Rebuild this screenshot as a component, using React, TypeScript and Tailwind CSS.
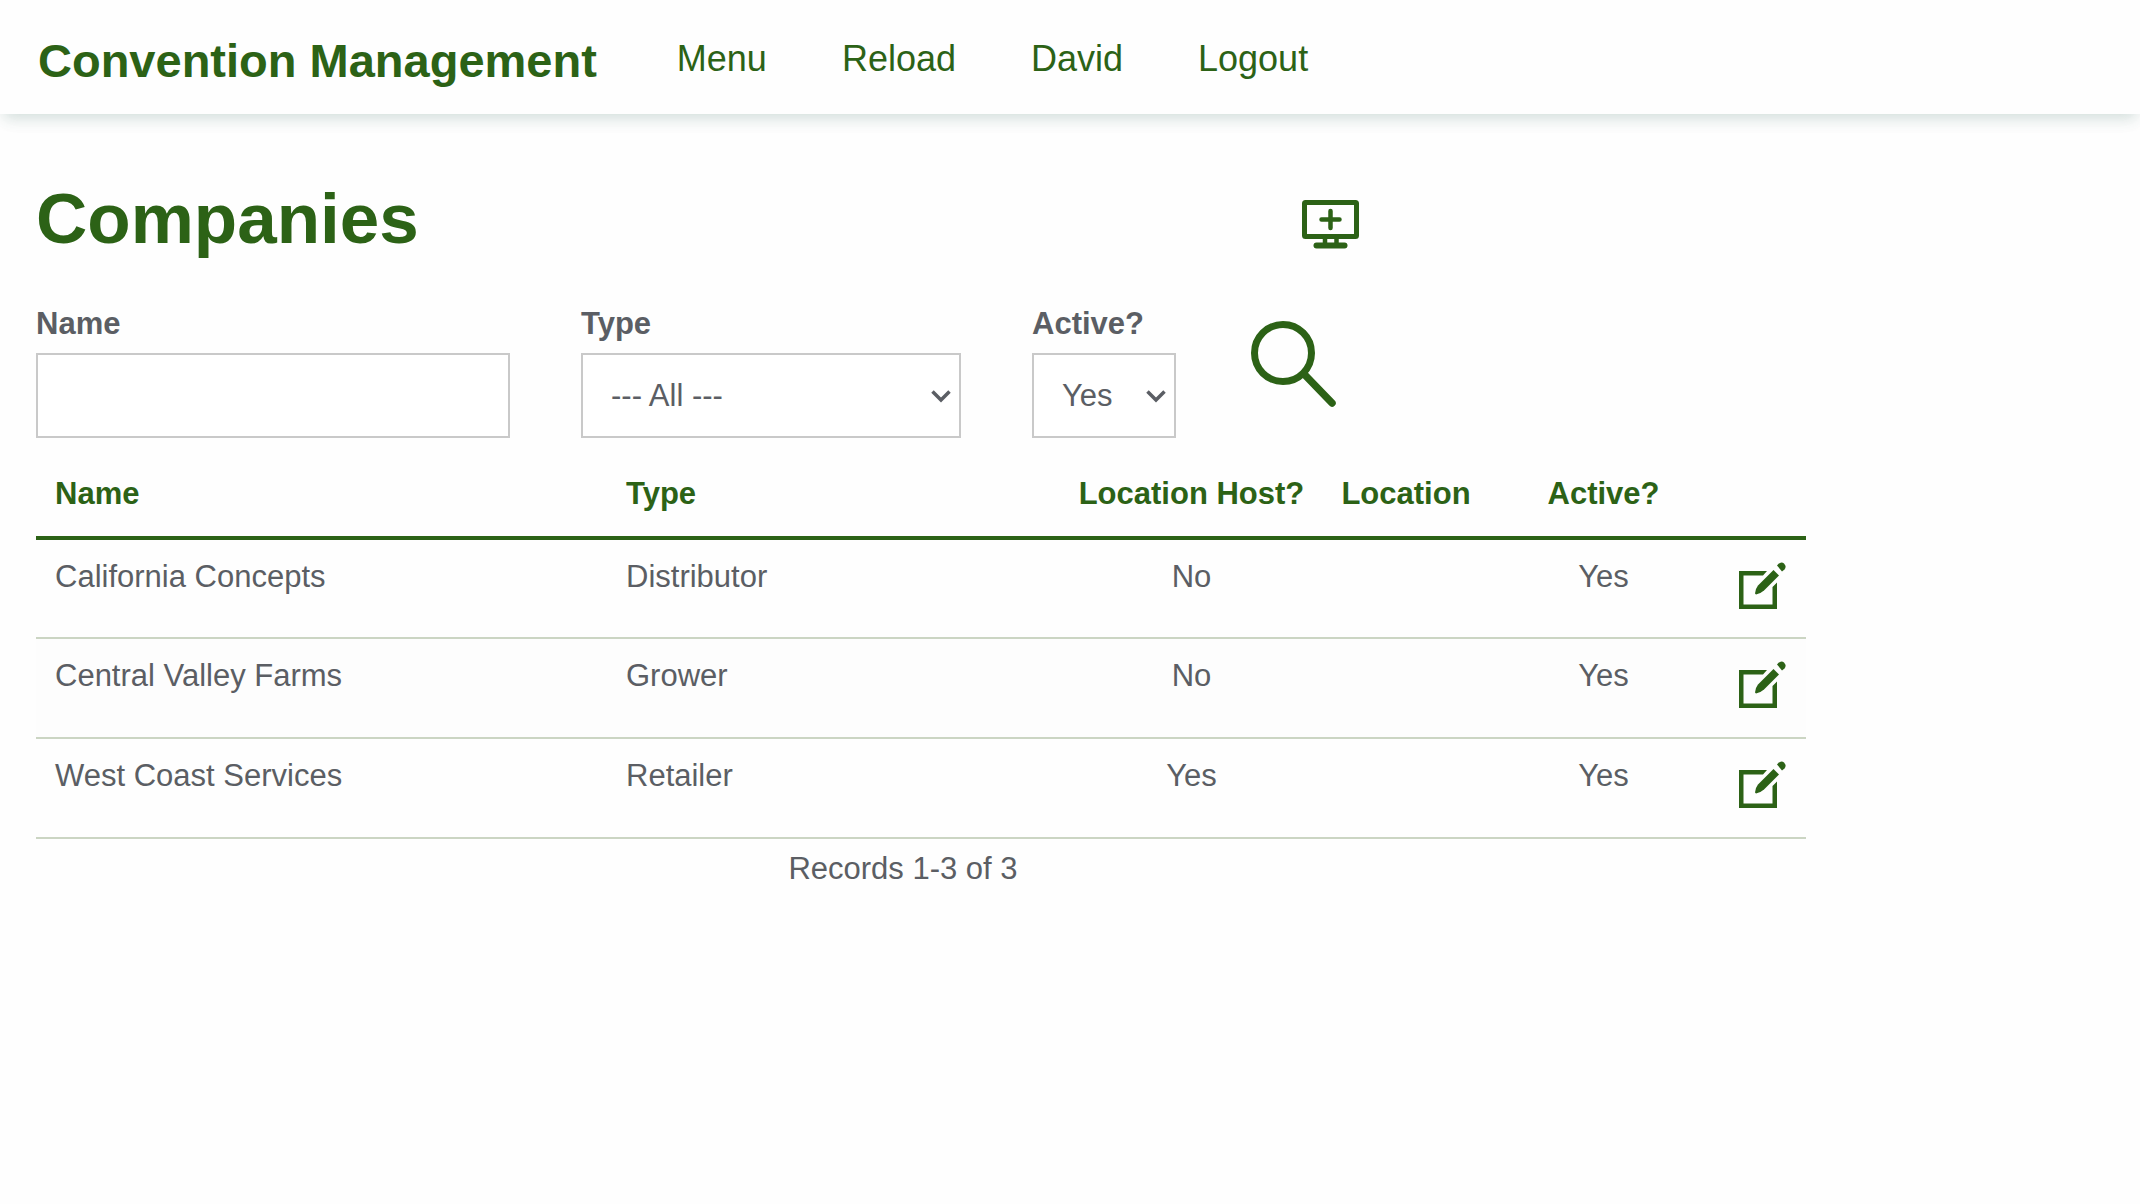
import type { ReactNode } from 'react'

type Company = {
  name: string
  type: string
  host: boolean
  location: string
  active: boolean
}

const companies: Company[] = [
  { name: 'California Concepts', type: 'Distributor', host: false, location: '', active: true },
  { name: 'Central Valley Farms', type: 'Grower', host: false, location: '', active: true },
  { name: 'West Coast Services', type: 'Retailer', host: true, location: '', active: true },
]

const navItems = ['Menu', 'Reload', 'David', 'Logout']

const yesNo = (value: boolean) => (value ? 'Yes' : 'No')

export default function App() {
  return (
    <div className="min-h-screen bg-[#fefefe] font-['Liberation_Sans',Arial,sans-serif] text-[31px] leading-9 text-[#5b5e64]">
      <Header />
      <main className="px-9 pt-[69px] pb-12">
        <div className="flex max-w-[1323px] items-center justify-between">
          <h1 className="text-[71px] leading-[72px] font-bold text-[#2c6216]">Companies</h1>
          <button type="button" aria-label="Add company" className="pt-2.5 text-[#2c6216]">
            <AddIcon />
          </button>
        </div>
        <Filters />
        <div className="max-w-[1770px]">
          <CompanyTable />
          <p className="mt-3 pr-9 text-center">
            Records 1-{companies.length} of {companies.length}
          </p>
        </div>
      </main>
    </div>
  )
}

function Header() {
  return (
    <header className="flex min-h-[114px] items-center gap-20 bg-[#fefefe] px-[38px] shadow-[0_8px_14px_-4px_rgba(50,110,95,0.2),0_10px_20px_rgba(0,0,0,0.02)]">
      <a href="#" className="pt-2 text-[47px] leading-[48px] font-bold text-[#2c6216]">
        Convention Management
      </a>
      <nav aria-label="Main" className="flex gap-[75px] pt-[3px] text-[36px] leading-9 text-[#2c6216]">
        {navItems.map((item) => (
          <a key={item} href="#">
            {item}
          </a>
        ))}
      </nav>
    </header>
  )
}

function Filters() {
  return (
    <form className="mt-[51px] flex items-start gap-[71px]" onSubmit={(e) => e.preventDefault()}>
      <Field id="name" label="Name">
        <input id="name" type="text" className="h-[85px] w-[474px] border-2 border-[#c9c9c9] bg-white px-7" />
      </Field>
      <Field id="type" label="Type">
        <Select id="type" options={['--- All ---', 'Distributor', 'Grower', 'Retailer']} className="w-[380px]" />
      </Field>
      <Field id="active" label="Active?">
        <Select id="active" options={['Yes', 'No']} className="w-36" />
      </Field>
      <button type="submit" aria-label="Search" className="mt-[15px] text-[#2c6216]">
        <SearchIcon />
      </button>
    </form>
  )
}

function Field({ id, label, children }: { id: string; label: string; children: ReactNode }) {
  return (
    <div className="flex flex-col gap-[11px]">
      <label htmlFor={id} className="font-bold">
        {label}
      </label>
      {children}
    </div>
  )
}

function Select({ id, options, className }: { id: string; options: string[]; className: string }) {
  return (
    <div className={`relative ${className}`}>
      <select id={id} className="h-[85px] w-full appearance-none border-2 border-[#c9c9c9] bg-white pl-7">
        {options.map((option) => (
          <option key={option}>{option}</option>
        ))}
      </select>
      <svg
        viewBox="0 0 20 14"
        className="pointer-events-none absolute top-9 right-2.5 h-[14px] w-5"
        fill="none"
        aria-hidden="true"
      >
        <path d="M1.500 2.500l8.500 8.500 8.500-8.500" stroke="currentColor" strokeWidth="3.500" />
      </svg>
    </div>
  )
}

function CompanyTable() {
  return (
    <table className="mt-[18px] w-full table-fixed border-collapse text-center">
      <colgroup>
        <col className="w-[571px]" />
        <col className="w-[453px]" />
        <col className="w-[263px]" />
        <col className="w-[166px]" />
        <col className="w-[229px]" />
        <col className="w-[88px]" />
      </colgroup>
      <thead className="border-b-4 border-[#2c6216] text-[#2c6216]">
        <tr className="whitespace-nowrap">
          <th className="px-[19px] pt-5 pb-6 text-left">Name</th>
          <th className="px-[19px] pt-5 pb-6 text-left">Type</th>
          <th className="pt-5 pb-6">Location Host?</th>
          <th className="pt-5 pb-6">Location</th>
          <th className="pt-5 pb-6">Active?</th>
          <td />
        </tr>
      </thead>
      <tbody>
        {companies.map((company) => (
          <tr key={company.name} className="h-[100px] border-b-2 border-[#cbd5c3] align-top even:bg-[#fdfdfd]">
            <td className="px-[19px] pt-[19px] text-left">{company.name}</td>
            <td className="px-[19px] pt-[19px] text-left">{company.type}</td>
            <td className="pt-[19px]">{yesNo(company.host)}</td>
            <td className="pt-[19px]">{company.location}</td>
            <td className="pt-[19px]">{yesNo(company.active)}</td>
            <td className="pt-[22px] pr-5">
              <button type="button" aria-label={`Edit ${company.name}`} className="ml-auto block text-[#2c6216]">
                <EditIcon />
              </button>
            </td>
          </tr>
        ))}
      </tbody>
    </table>
  )
}

function AddIcon() {
  return (
    <svg viewBox="0 0 57 49" className="h-[49px] w-[57px]" fill="none" stroke="currentColor">
      <rect x="2.500" y="2.500" width="52" height="34" rx="1" strokeWidth="5" />
      <path d="M28.500 11v17M19.500 19.500h18" strokeWidth="4.500" strokeLinecap="round" />
      <path d="M23 37v7M34.500 37v7" strokeWidth="4.500" />
      <path d="M14.500 45.500h28" strokeWidth="6" strokeLinecap="round" />
    </svg>
  )
}

function SearchIcon() {
  return (
    <svg viewBox="0 0 91 88" className="h-[88px] w-[91px]" fill="none" stroke="currentColor">
      <circle cx="36" cy="32" r="28.500" strokeWidth="7" />
      <path d="M57 53l28 29" strokeWidth="7.500" strokeLinecap="round" />
    </svg>
  )
}

function EditIcon() {
  return (
    <svg viewBox="0 0 47 47" className="size-[47px]" fill="currentColor">
      <path d="M0 9h28l-4 4.500H4.500v29h29V25l4.500-4.500V47H0z" />
      <path d="M16 31.500q.500-5 3-8L34.500 8l5.500 5.500L25 28.500q-4 3.500-8 4z" />
      <path d="M38 3.500Q42-1.500 45 1.500t.500 6L43 9.500z" />
    </svg>
  )
}
